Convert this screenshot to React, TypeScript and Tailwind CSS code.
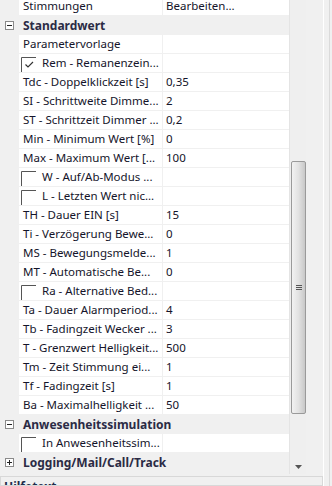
type Prop = {
  label: string;
  value?: string;
  check?: boolean;
  checked?: boolean;
};

type Row =
  | { kind: "cat"; label: string; open: boolean }
  | ({ kind: "prop" } & Prop);

const rows: Row[] = [
  { kind: "prop", label: "Stimmungen", value: "Bearbeiten..." },
  { kind: "cat", label: "Standardwert", open: true },
  { kind: "prop", label: "Parametervorlage" },
  { kind: "prop", label: "Rem - Remanenzein...", check: true, checked: true },
  { kind: "prop", label: "Tdc - Doppelklickzeit [s]", value: "0,35" },
  { kind: "prop", label: "SI - Schrittweite Dimme...", value: "2" },
  { kind: "prop", label: "ST - Schrittzeit Dimmer ...", value: "0,2" },
  { kind: "prop", label: "Min - Minimum Wert [%]", value: "0" },
  { kind: "prop", label: "Max - Maximum Wert [...", value: "100" },
  { kind: "prop", label: "W - Auf/Ab-Modus ...", check: true },
  { kind: "prop", label: "L - Letzten Wert nic...", check: true },
  { kind: "prop", label: "TH - Dauer EIN [s]", value: "15" },
  { kind: "prop", label: "Ti - Verzögerung Bewe...", value: "0" },
  { kind: "prop", label: "MS - Bewegungsmelde...", value: "1" },
  { kind: "prop", label: "MT - Automatische Be...", value: "0" },
  { kind: "prop", label: "Ra - Alternative Bed...", check: true },
  { kind: "prop", label: "Ta - Dauer Alarmperiod...", value: "4" },
  { kind: "prop", label: "Tb - Fadingzeit Wecker ...", value: "3" },
  { kind: "prop", label: "T - Grenzwert Helligkeit...", value: "500" },
  { kind: "prop", label: "Tm - Zeit Stimmung ei...", value: "1" },
  { kind: "prop", label: "Tf - Fadingzeit [s]", value: "1" },
  { kind: "prop", label: "Ba - Maximalhelligkeit ...", value: "50" },
  { kind: "cat", label: "Anwesenheitssimulation", open: true },
  { kind: "prop", label: "In Anwesenheitssim...", check: true },
  { kind: "cat", label: "Logging/Mail/Call/Track", open: false },
];

function ExpandBox({ open }: { open: boolean }) {
  return (
    <svg width="9" height="9" viewBox="0 0 9 9" className="block">
      <rect x="0.5" y="0.5" width="8" height="8" fill="#fff" stroke="#8a8a8a" />
      <path d="M2 4.5 H7" stroke="#222" />
      {!open && <path d="M4.5 2 V7" stroke="#222" />}
    </svg>
  );
}

function CheckBox({ checked }: { checked?: boolean }) {
  return (
    <svg width="15" height="15" viewBox="0 0 15 15" className="block shrink-0">
      <path d="M0.5 15 V0.5 H15" fill="none" stroke="#555" />
      {checked && (
        <path d="M4.5 7.5 L7 10 L12 5" fill="none" stroke="#333" strokeWidth="1.2" />
      )}
    </svg>
  );
}

function CategoryRow({ label, open }: { label: string; open: boolean }) {
  return (
    <div className="flex h-[19px] items-center bg-[#f0f0f0]">
      <div className="flex w-[23px] shrink-0 pl-[5px]">
        <ExpandBox open={open} />
      </div>
      <span className="text-[12px] font-bold text-[#2b2b45]">{label}</span>
    </div>
  );
}

function PropRow({ label, value, check, checked }: Prop) {
  return (
    <div className="flex h-[19px]">
      <div className="w-[19px] shrink-0 bg-[#f0f0f0]" />
      <div className="flex w-[143px] shrink-0 items-center overflow-hidden whitespace-nowrap border-b border-[#f0f0f0] bg-white pl-[4px] text-[#14142a]">
        {check ? (
          <div className="-ml-[2px] flex items-center gap-[6px]">
            <div className="mt-[3px]">
              <CheckBox checked={checked} />
            </div>
            <span>{label}</span>
          </div>
        ) : (
          <span>{label}</span>
        )}
      </div>
      <div className="w-px shrink-0 bg-[#f0f0f0]" />
      <div className="flex flex-1 items-center whitespace-nowrap border-b border-[#f0f0f0] bg-white pl-[3px] text-[#14142a]">
        {value}
      </div>
    </div>
  );
}

function Scrollbar() {
  return (
    <div className="relative w-[17px] shrink-0 border-l border-[#e4e4e4] bg-[#efefef]">
      <div className="absolute left-[1px] top-[161px] flex h-[253px] w-[15px] items-center justify-center rounded-[2px] border border-[#9a9a9a] bg-gradient-to-r from-[#f2f2f2] via-[#e2e2e2] to-[#c8c8c8]">
        <div className="flex flex-col gap-[1px]">
          <div className="h-px w-[6px] bg-[#555]" />
          <div className="h-px w-[6px] bg-[#555]" />
          <div className="h-px w-[6px] bg-[#555]" />
        </div>
      </div>
      <svg
        width="7"
        height="4"
        viewBox="0 0 7 4"
        className="absolute bottom-[5px] left-[5px]"
      >
        <path d="M0 0 H7 L3.5 4 Z" fill="#555" />
      </svg>
    </div>
  );
}

export default function App() {
  return (
    <div
      className="flex h-[486px] w-[332px] overflow-hidden bg-[#f0f0f0] text-[11.5px] leading-none"
      style={{ fontFamily: '"Noto Sans", "Open Sans", sans-serif' }}
    >
      <div className="flex w-[323px] shrink-0 flex-col">
        <div className="flex h-[474px] shrink-0 overflow-hidden">
          <div className="w-[289px] shrink-0 overflow-hidden">
            <div className="-mt-[3px]">
              {rows.map((r, i) =>
                r.kind === "cat" ? (
                  <CategoryRow key={i} label={r.label} open={r.open} />
                ) : (
                  <PropRow key={i} {...r} />
                )
              )}
            </div>
          </div>
          <Scrollbar />
        </div>
        <div className="mt-[2px] flex-1 overflow-hidden border border-[#d8d8d8] bg-[#f0f0f0] px-[3px] pt-[4px]">
          <span className="text-[12px] font-bold text-[#1e2b4b]">Hilfetext</span>
        </div>
      </div>
      <div className="flex flex-1 border-l border-white">
        <div className="w-[5px]" />
        <div className="w-px bg-[#dadada]" />
      </div>
    </div>
  );
}
